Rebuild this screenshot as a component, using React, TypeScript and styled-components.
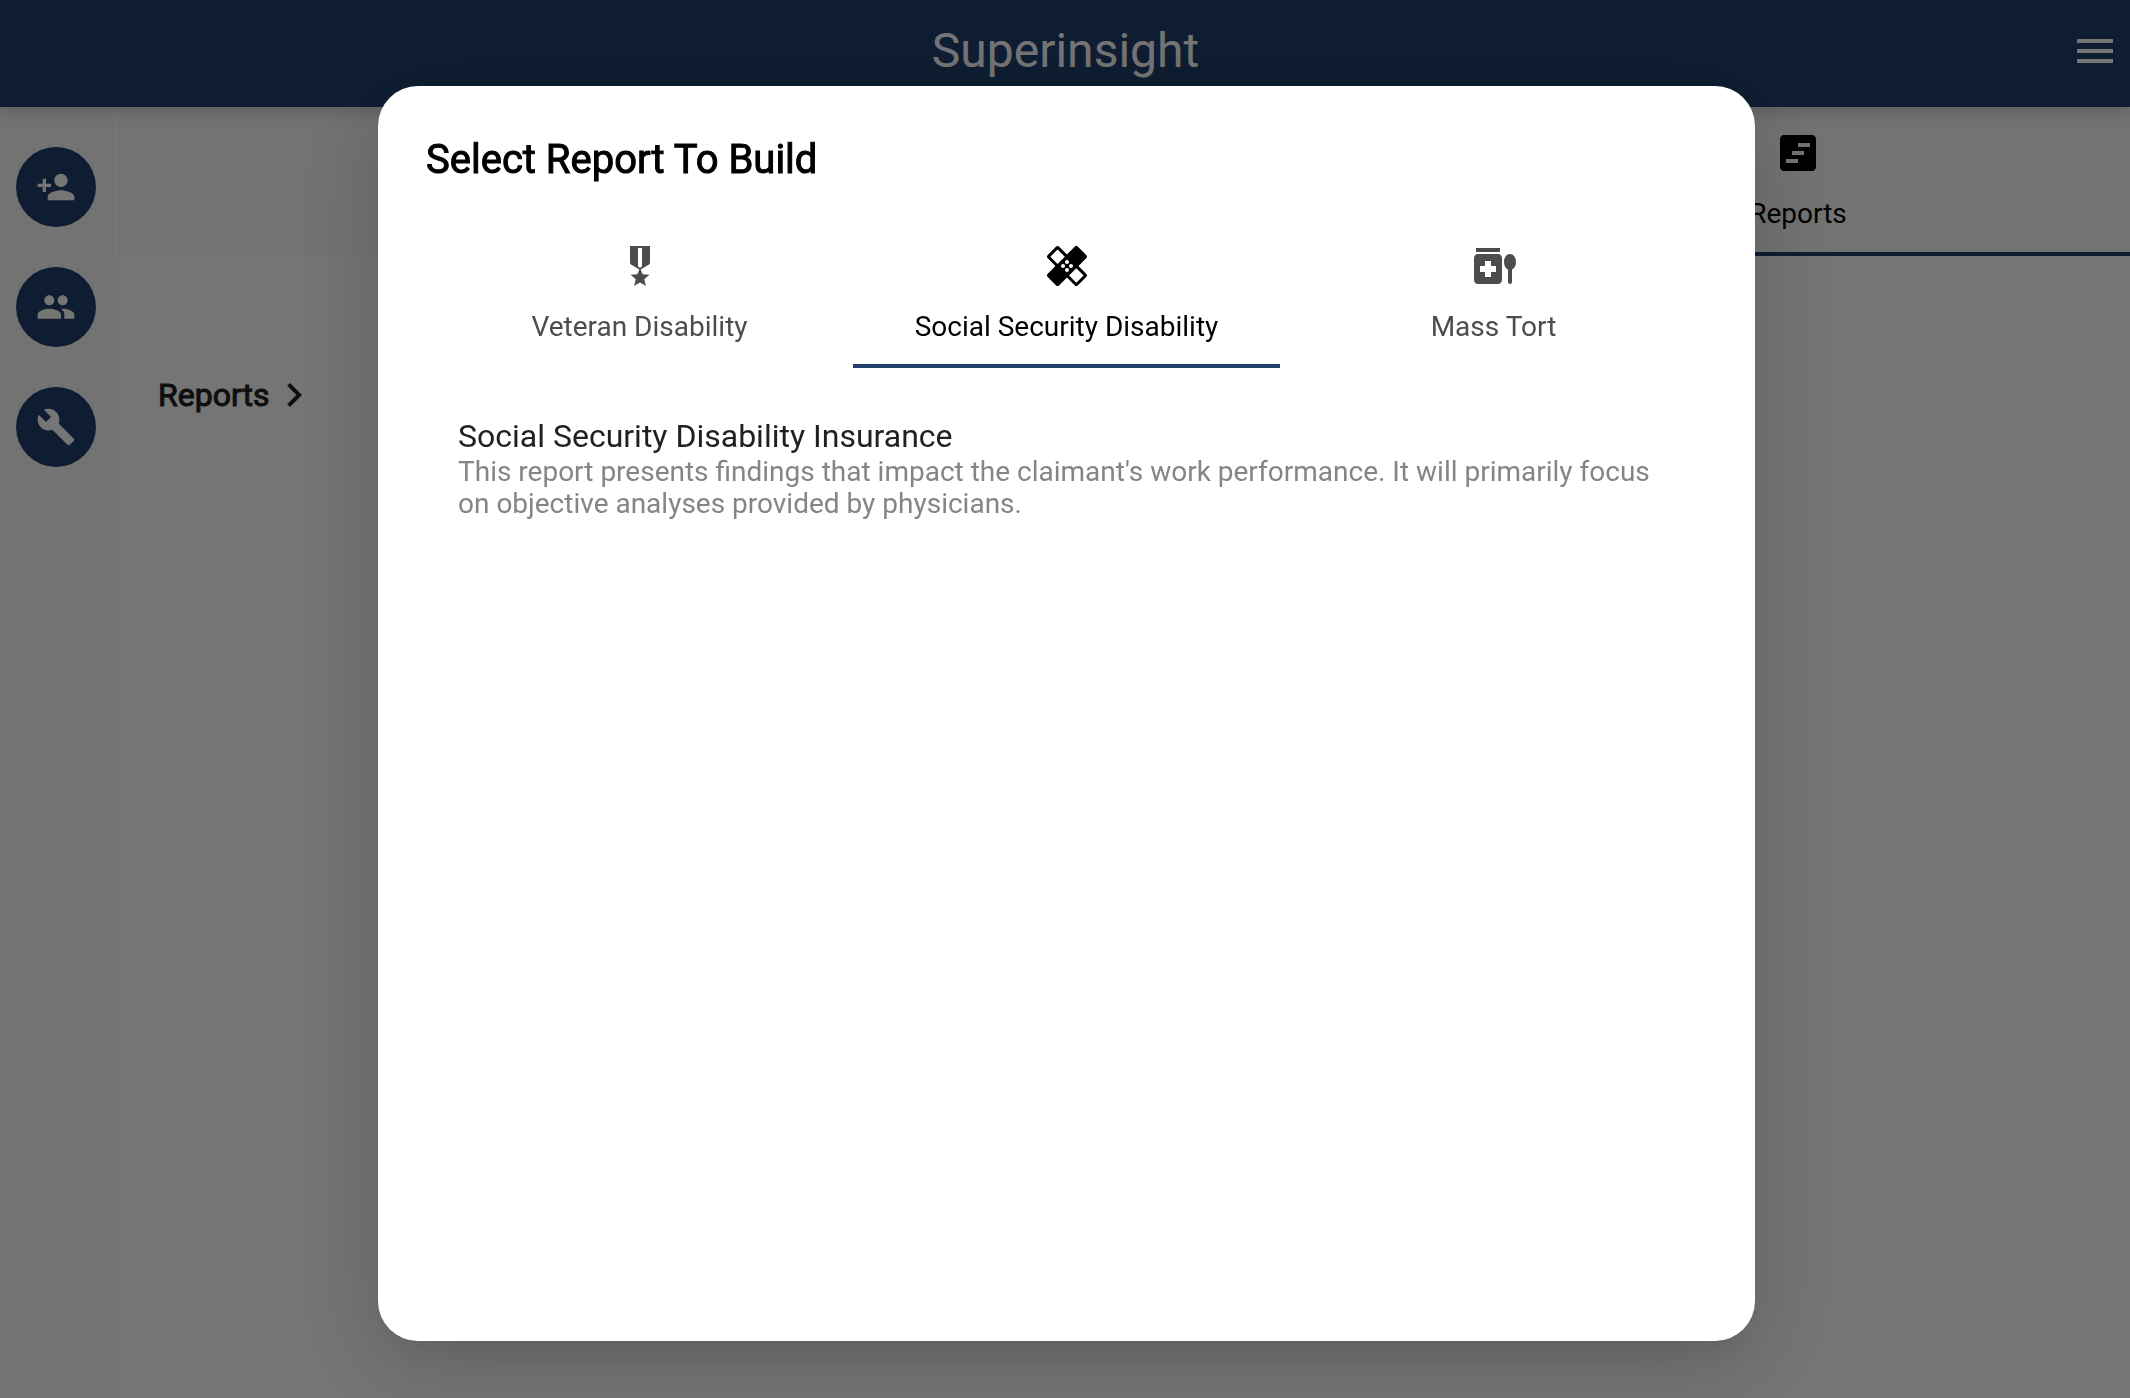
import React from "react";
import styled, { createGlobalStyle } from "styled-components";
import {
  MdBuild,
  MdChevronRight,
  MdHealing,
  MdMedicationLiquid,
  MdMenu,
  MdMilitaryTech,
  MdPeople,
  MdPersonAdd,
  MdViewTimeline,
} from "react-icons/md";

const navy = "#21416f";

const GlobalStyle = createGlobalStyle`
  *, *::before, *::after { box-sizing: border-box; }
  body {
    margin: 0;
    background: #fefefe;
    color: #000;
    font-family: Roboto, "Liberation Sans", sans-serif;
    overflow: hidden;
  }
  button {
    padding: 0;
    border: 0;
    background: none;
    color: inherit;
    font: inherit;
    cursor: pointer;
  }
  h1, h2, h3, p, ul { margin: 0; padding: 0; }
  svg { display: block; }
`;

const Page = styled.div`
  display: flex;
  flex-direction: column;
  min-height: 100vh;
`;

const AppBar = styled.header`
  display: grid;
  grid-template-columns: 1fr auto 1fr;
  align-items: center;
  height: 107px;
  padding: 0 11px 6px 12px;
  background: ${navy};
  color: #fff;
  box-shadow: 0 4px 16px rgba(0, 0, 0, 0.2);
  z-index: 1;
`;

const Brand = styled.h1`
  grid-column: 2;
  font-size: 48px;
  line-height: 56px;
  font-weight: 400;
`;

const MenuButton = styled.button`
  justify-self: end;
  font-size: 48px;
`;

const Body = styled.div`
  display: flex;
  flex: 1;
`;

const Rail = styled.nav`
  display: flex;
  flex-direction: column;
  gap: 40px;
  width: 114px;
  padding: 40px 16px;
  background: #fafafa;
`;

const RailButton = styled.button`
  display: grid;
  place-items: center;
  width: 80px;
  height: 80px;
  border-radius: 50%;
  background: ${navy};
  color: #fff;
  font-size: 40px;
`;

const Content = styled.main`
  flex: 1;
  padding-left: 4px;
`;

const SectionTabs = styled.div`
  display: flex;
  justify-content: flex-end;
  height: 149px;
  background: #fafafa;
`;

const Tab = styled.button<{ $active?: boolean }>`
  display: flex;
  flex-direction: column;
  align-items: center;
  gap: 21px;
  padding: 16px 0;
  border-bottom: 4px solid ${(p) => (p.$active ? navy : "transparent")};
  color: ${(p) => (p.$active ? "#000" : "#4d4d4d")};
  font-size: 28px;
  line-height: 32px;
`;

const TabIcon = styled.span`
  font-size: 48px;
`;

const SectionTab = styled(Tab)`
  width: 33%;
  padding-top: 22px;
`;

const Crumb = styled.button`
  display: flex;
  align-items: center;
  margin: 115px 0 0 40px;
  color: #212121;
  font-size: 32px;
  line-height: 48px;
  -webkit-text-stroke: 1px currentColor;
`;

const CrumbIcon = styled.span`
  font-size: 48px;
  -webkit-text-stroke: 0;
`;

const Scrim = styled.div`
  position: fixed;
  inset: 0;
  z-index: 2;
  display: flex;
  padding: 86px 375px 57px 378px;
  background: rgba(0, 0, 0, 0.54);
`;

const Dialog = styled.section`
  flex: 1;
  padding: 50px 48px;
  border-radius: 40px;
  background: #fff;
  box-shadow: 0 22px 30px -14px rgba(0, 0, 0, 0.08),
    0 20px 90px 10px rgba(0, 0, 0, 0.16);
`;

const DialogTitle = styled.h2`
  font-size: 40px;
  line-height: 48px;
  font-weight: 400;
  -webkit-text-stroke: 1px currentColor;
`;

const DialogTabs = styled.div`
  display: grid;
  grid-template-columns: repeat(3, 1fr);
  margin-top: 42px;
  height: 142px;
`;

const ReportList = styled.ul`
  padding: 48px 32px;
  list-style: none;
`;

const ReportButton = styled.button`
  display: block;
  width: 100%;
  text-align: left;
`;

const ReportName = styled.h3`
  color: #212121;
  font-size: 32px;
  line-height: 40px;
  font-weight: 400;
`;

const ReportText = styled.p`
  color: #858585;
  font-size: 28px;
  line-height: 32px;
`;

const reportKinds = [
  { label: "Veteran Disability", Icon: MdMilitaryTech },
  { label: "Social Security Disability", Icon: MdHealing, active: true },
  { label: "Mass Tort", Icon: MdMedicationLiquid },
];

export default function App() {
  return (
    <>
      <GlobalStyle />
      <Page>
        <AppBar>
          <Brand>Superinsight</Brand>
          <MenuButton aria-label="Menu">
            <MdMenu />
          </MenuButton>
        </AppBar>
        <Body>
          <Rail>
            <RailButton aria-label="Add client">
              <MdPersonAdd />
            </RailButton>
            <RailButton aria-label="Clients">
              <MdPeople />
            </RailButton>
            <RailButton aria-label="Tools">
              <MdBuild />
            </RailButton>
          </Rail>
          <Content>
            <SectionTabs role="tablist">
              <SectionTab role="tab" aria-selected $active>
                <TabIcon>
                  <MdViewTimeline />
                </TabIcon>
                Reports
              </SectionTab>
            </SectionTabs>
            <Crumb>
              Reports
              <CrumbIcon>
                <MdChevronRight />
              </CrumbIcon>
            </Crumb>
          </Content>
        </Body>
      </Page>
      <Scrim>
        <Dialog role="dialog" aria-modal aria-labelledby="dialog-title">
          <DialogTitle id="dialog-title">Select Report To Build</DialogTitle>
          <DialogTabs role="tablist">
            {reportKinds.map(({ label, Icon, active }) => (
              <Tab key={label} role="tab" aria-selected={!!active} $active={active}>
                <TabIcon>
                  <Icon />
                </TabIcon>
                {label}
              </Tab>
            ))}
          </DialogTabs>
          <ReportList>
            <li>
              <ReportButton>
                <ReportName>Social Security Disability Insurance</ReportName>
                <ReportText>
                  This report presents findings that impact the claimant's work
                  performance. It will primarily focus on objective analyses
                  provided by physicians.
                </ReportText>
              </ReportButton>
            </li>
          </ReportList>
        </Dialog>
      </Scrim>
    </>
  );
}
